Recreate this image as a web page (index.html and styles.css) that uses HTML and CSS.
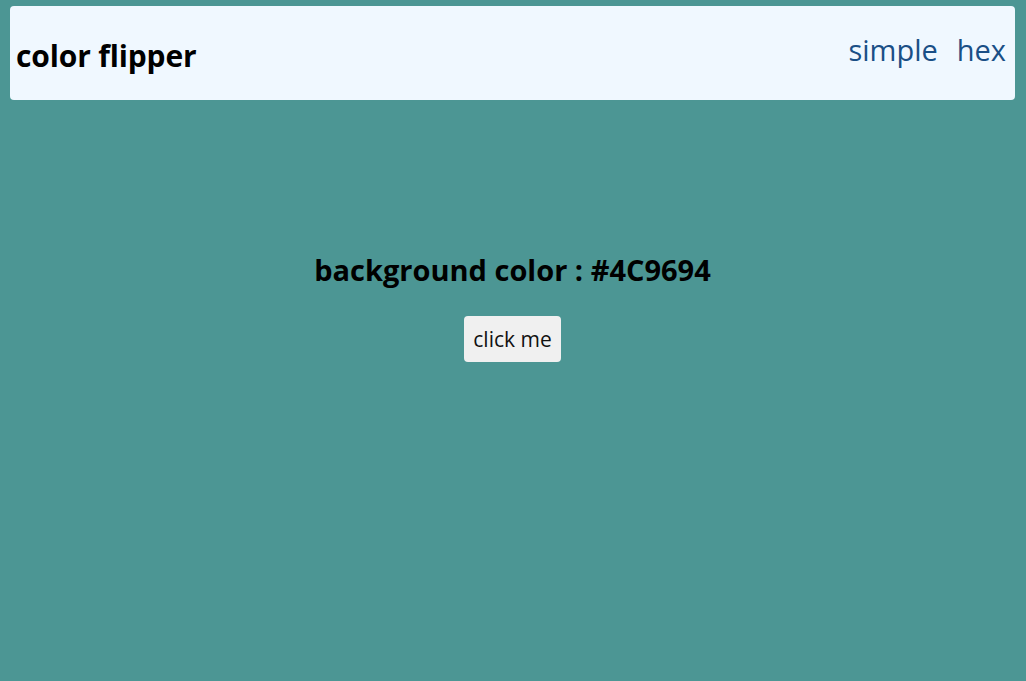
FILE: index.html
```html
<!DOCTYPE html>
<html>
<head>
<meta charset="utf-8">
<link rel="stylesheet" href="styles.css">
</head>
<body>
<nav class="nav">
  <h1 class="brand">color flipper</h1>
  <ul class="links">
    <li><a href="#">simple</a></li>
    <li><a href="#">hex</a></li>
  </ul>
</nav>
<main class="main">
  <h2 class="title">background color : <span class="code">#4C9694</span></h2>
  <button class="btn">click me</button>
</main>
</body>
</html>
```
FILE: styles.css
```css
* { box-sizing: border-box; }
html, body { height: 100%; }
body {
  margin: 0;
  padding: 6px 11px 0 10px;
  background: #4C9694;
  font-family: "Open Sans", "Noto Sans", sans-serif;
}
.nav {
  height: 94px;
  background: #F0F8FF;
  border-radius: 4px;
  display: flex;
  align-items: center;
  justify-content: space-between;
  padding: 0 9px 0 6px;
}
.brand {
  margin: 0;
  font-size: 30px;
  font-weight: 700;
  color: #000;
  letter-spacing: -0.15px;
  padding-top: 4px;
}
.links {
  list-style: none;
  margin: 0;
  padding: 0 0 8px 0;
  display: flex;
  gap: 19px;
}
.links a {
  color: #1A4F86;
  text-decoration: none;
  font-size: 29px;
}
.main {
  display: flex;
  flex-direction: column;
  align-items: center;
  padding-top: 150px;
}
.title {
  margin: 0;
  font-size: 29px;
  font-weight: 700;
  color: #000;
}
.btn {
  margin-top: 27px;
  background: #F0F0F0;
  border: none;
  border-radius: 4px;
  font-family: inherit;
  font-size: 21px;
  color: #111;
  padding: 9px 9px;
}
```
